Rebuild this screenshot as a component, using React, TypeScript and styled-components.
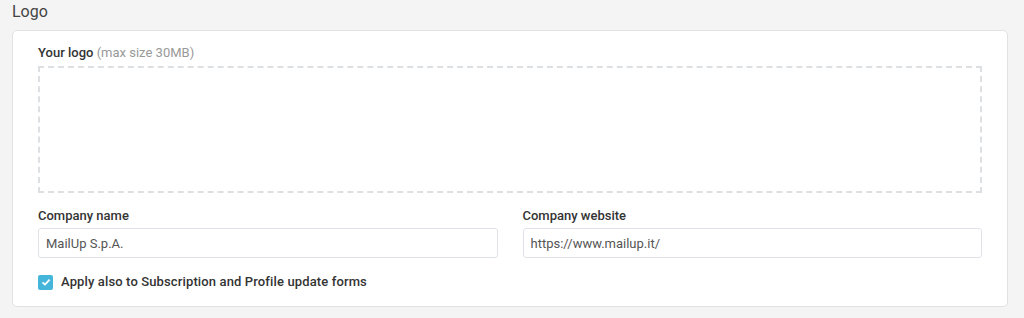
import React from 'react';
import styled, { createGlobalStyle } from 'styled-components';

const GlobalStyle = createGlobalStyle`
  html, body {
    margin: 0;
    padding: 0;
    background: #f4f4f4;
    font-family: Roboto, 'Liberation Sans', Arial, sans-serif;
  }
  * { box-sizing: border-box; }
`;

const Page = styled.div`
  padding: 2px 16px 0 12px;
  width: 1024px;
  height: 318px;
`;

const SectionTitle = styled.h2`
  margin: 0 0 8px 0;
  font-size: 16px;
  font-weight: 400;
  line-height: 20px;
  color: #444;
`;

const Card = styled.div`
  background: #fff;
  border: 1px solid #e2e2e2;
  border-radius: 5px;
  padding: 14px 25px 16px 25px;
`;

const Label = styled.div<{ gap?: number }>`
  font-size: 13px;
  font-weight: 500;
  line-height: 16px;
  color: #333;
  margin-bottom: ${({ gap }) => gap ?? 4}px;
  small {
    font-size: 13px;
    font-weight: 400;
    color: #999;
  }
`;

const DropZone = styled.div`
  height: 127px;
  border: 2px dashed #dde0e3;
  margin-bottom: 15px;
`;

const Row = styled.div`
  display: grid;
  grid-template-columns: 1fr 1fr;
  column-gap: 25px;
`;

const Field = styled.div`
  display: flex;
  flex-direction: column;
`;

const Input = styled.input`
  height: 30px;
  border: 1px solid #dfe3e8;
  border-radius: 3px;
  padding: 0 7px;
  font-family: inherit;
  font-size: 13px;
  color: #555;
  outline: none;
`;

const CheckRow = styled.label`
  display: flex;
  align-items: center;
  gap: 8px;
  margin-top: 16px;
  font-size: 13px;
  font-weight: 500;
  letter-spacing: 0.13px;
  line-height: 16px;
  color: #333;
`;

const Box = styled.span<{ checked: boolean }>`
  width: 15px;
  height: 15px;
  border-radius: 2px;
  background: ${({ checked }) => (checked ? '#45b6d9' : '#fff')};
  display: inline-flex;
  align-items: center;
  justify-content: center;
`;

export default function App() {
  return (
    <Page>
      <GlobalStyle />
      <SectionTitle>Logo</SectionTitle>
      <Card>
        <Label gap={5}>
          Your logo <small>(max size 30MB)</small>
        </Label>
        <DropZone />
        <Row>
          <Field>
            <Label>Company name</Label>
            <Input defaultValue="MailUp S.p.A." />
          </Field>
          <Field>
            <Label>Company website</Label>
            <Input defaultValue="https://www.mailup.it/" />
          </Field>
        </Row>
        <CheckRow>
          <Box checked>
            <svg width="10" height="10" viewBox="0 0 10 10">
              <path d="M1.5 5.3 L4 7.6 L8.6 2.6" fill="none" stroke="#fff" strokeWidth="1.8" />
            </svg>
          </Box>
          Apply also to Subscription and Profile update forms
        </CheckRow>
      </Card>
    </Page>
  );
}
